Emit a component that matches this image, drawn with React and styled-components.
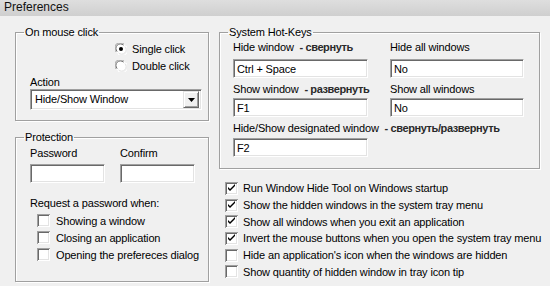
import React from "react";
import styled, { createGlobalStyle } from "styled-components";

const Global = createGlobalStyle`
  html, body { margin: 0; padding: 0; }
  body {
    background: #f0f0f0;
    font-family: "Liberation Sans", Arial, sans-serif;
    font-size: 11px;
    letter-spacing: -0.15px;
    color: #000;
    width: 550px;
    height: 286px;
    overflow: hidden;
  }
`;

const Window = styled.div`
  width: 550px;
  height: 286px;
  display: flex;
  flex-direction: column;
  background: #f0f0f0;
`;

const TitleBar = styled.div`
  height: 16px;
  flex: none;
  background: linear-gradient(#dedede, #cfcfcf);
  font-size: 12px;
  letter-spacing: 0;
  line-height: 15px;
  padding-left: 4px;
  color: #111;
`;

const Body = styled.div`
  display: flex;
  gap: 10px;
  padding: 10px 0 0 15px;
`;

const Column = styled.div`
  display: flex;
  flex-direction: column;
  width: ${(p) => p.$w}px;
  gap: ${(p) => p.$gap || 0}px;
`;

const Group = styled.fieldset`
  margin: 0;
  padding: 0;
  border: 1px solid #a0a0a0;
  box-shadow: inset 1px 1px 0 #fff, 1px 1px 0 #fff;
  min-width: 0;
`;

const Legend = styled.legend`
  padding: 0 1px;
  margin-left: 8px;
  line-height: 13px;
  font-size: 11px;
`;

const GroupBody = styled.div`
  display: flex;
  flex-direction: column;
  align-items: flex-start;
  padding: ${(p) => p.$pad};
`;

const RadioStack = styled.div`
  display: flex;
  flex-direction: column;
  margin-left: 85px;
  margin-top: 1px;
`;

const RadioRow = styled.label`
  display: flex;
  align-items: center;
  height: 17px;
  gap: 5px;
  white-space: nowrap;
`;

const Label = styled.div`
  line-height: 14px;
  height: 14px;
  white-space: nowrap;
  margin-top: ${(p) => p.$mt || 0}px;
`;

const Ru = styled.b`
  color: #2a2a2a;
  font-weight: bold;
  letter-spacing: -0.4px;
`;

const Combo = styled.div`
  width: 172px;
  height: 21px;
  box-sizing: border-box;
  border-top: 1px solid #a0a0a0;
  border-left: 1px solid #a0a0a0;
  border-right: 1px solid #fff;
  border-bottom: 1px solid #fff;
  box-shadow: inset 1px 1px 0 #696969, inset -1px -1px 0 #e3e3e3;
  background: #fff;
  display: flex;
  align-items: center;
  padding: 2px;
`;

const ComboText = styled.div`
  flex: 1;
  padding-left: 2px;
  line-height: 15px;
`;

const ComboButton = styled.div`
  width: 16px;
  height: 17px;
  box-sizing: border-box;
  background: #f0f0f0;
  border-top: 1px solid #e3e3e3;
  border-left: 1px solid #e3e3e3;
  border-right: 1px solid #696969;
  border-bottom: 1px solid #696969;
  box-shadow: inset 1px 1px 0 #fff, inset -1px -1px 0 #a0a0a0;
  display: flex;
  align-items: center;
  justify-content: center;
`;

const Field = styled.div`
  width: ${(p) => p.$w}px;
  height: 19px;
  box-sizing: border-box;
  border-top: 1px solid #a0a0a0;
  border-left: 1px solid #a0a0a0;
  border-right: 1px solid #fff;
  border-bottom: 1px solid #fff;
  box-shadow: inset 1px 1px 0 #696969, inset -1px -1px 0 #e3e3e3;
  background: #fff;
  padding: 2px 0 0 3px;
  line-height: 14px;
  margin-top: ${(p) => p.$mt || 0}px;
`;

const PassGrid = styled.div`
  display: grid;
  grid-template-columns: 75px 75px;
  column-gap: 15px;
  row-gap: 4px;
  margin-top: 2px;
`;

const CheckList = styled.div`
  display: flex;
  flex-direction: column;
  padding-left: ${(p) => p.$pl || 0}px;
  margin-top: ${(p) => p.$mt || 0}px;
`;

const CheckRow = styled.label`
  display: flex;
  align-items: center;
  height: ${(p) => p.$h}px;
  gap: ${(p) => p.$gap}px;
  white-space: nowrap;
`;

const BoxWrap = styled.span`
  width: ${(p) => p.$s || 13}px;
  height: ${(p) => p.$s || 13}px;
  flex: none;
  display: block;
`;

const HotGrid = styled.div`
  display: grid;
  grid-template-columns: 135px 134px;
  column-gap: 22px;
  margin-top: 1px;
`;

const HotCell = styled.div`
  display: flex;
  flex-direction: column;
  grid-column: ${(p) => (p.$wide ? "1 / span 2" : "auto")};
  margin-bottom: ${(p) => p.$mb || 0}px;
`;

const Check = ({ checked }) => (
  <BoxWrap>
    <svg width="13" height="13" viewBox="0 0 13 13">
      <rect x="0" y="0" width="13" height="13" fill="#a0a0a0" />
      <rect x="1" y="1" width="12" height="12" fill="#fff" />
      <rect x="1" y="1" width="11" height="11" fill="#696969" />
      <rect x="2" y="2" width="10" height="10" fill="#e3e3e3" />
      <rect x="2" y="2" width="9" height="9" fill="#fff" />
      {checked && <path d="M3 5 L3 7 L5 9 L10 4 L10 2 L5 7 Z" fill="#000" />}
    </svg>
  </BoxWrap>
);

const Radio = ({ checked }) => (
  <BoxWrap $s={12}>
    <svg width="12" height="12" viewBox="0 0 12 12">
      <circle cx="6" cy="6" r="5.5" fill="#fff" />
      <path d="M1.2 9 A5.5 5.5 0 0 1 9 1.2" stroke="#a0a0a0" strokeWidth="1" fill="none" />
      <path d="M2.2 8.5 A4.4 4.4 0 0 1 8.5 2.2" stroke="#696969" strokeWidth="1" fill="none" />
      <path d="M3 11 A5.5 5.5 0 0 0 11 3" stroke="#fff" strokeWidth="1" fill="none" />
      <path d="M3.5 9.8 A4.4 4.4 0 0 0 9.8 3.5" stroke="#e3e3e3" strokeWidth="1" fill="none" />
      {checked && <circle cx="6" cy="6" r="2" fill="#000" />}
    </svg>
  </BoxWrap>
);

const Arrow = () => (
  <svg width="7" height="4" viewBox="0 0 7 4">
    <path d="M0 0 H7 L3.5 4 Z" fill="#000" />
  </svg>
);

const options = [
  { text: "Run Window Hide Tool on Windows startup", on: true },
  { text: "Show the hidden windows in the system tray menu", on: true },
  { text: "Show all windows when you exit an application", on: true },
  { text: "Invert the mouse buttons when you open the system tray menu", on: true },
  { text: "Hide an application's icon when the windows are hidden", on: false },
  { text: "Show quantity of hidden window in tray icon tip", on: false },
];

const protect = ["Showing a window", "Closing an application", "Opening the prefereces dialog"];

export default function App() {
  return (
    <>
      <Global />
      <Window>
        <TitleBar>Preferences</TitleBar>
        <Body>
          <Column $w={194} $gap={10}>
            <Group>
              <Legend>On mouse click</Legend>
              <GroupBody $pad="0 0 10px 14px">
                <RadioStack>
                  <RadioRow>
                    <Radio checked />
                    Single click
                  </RadioRow>
                  <RadioRow>
                    <Radio />
                    Double click
                  </RadioRow>
                </RadioStack>
                <Label $mt={1}>Action</Label>
                <Combo>
                  <ComboText>Hide/Show Window</ComboText>
                  <ComboButton>
                    <Arrow />
                  </ComboButton>
                </Combo>
              </GroupBody>
            </Group>
            <Group>
              <Legend>Protection</Legend>
              <GroupBody $pad="0 0 18px 14px">
                <PassGrid>
                  <Label>Password</Label>
                  <Label>Confirm</Label>
                  <Field $w={75} />
                  <Field $w={75} />
                </PassGrid>
                <Label $mt={13}>Request a password when:</Label>
                <CheckList $pl={7} $mt={2}>
                  {protect.map((t) => (
                    <CheckRow key={t} $h={17} $gap={6}>
                      <Check />
                      {t}
                    </CheckRow>
                  ))}
                </CheckList>
              </GroupBody>
            </Group>
          </Column>
          <Column $w={321}>
            <Group>
              <Legend>System Hot-Keys</Legend>
              <GroupBody $pad="0 0 11px 13px">
                <HotGrid>
                  <HotCell $mb={4}>
                    <Label>
                      Hide window&nbsp; <Ru>- свернуть</Ru>
                    </Label>
                    <Field $w={135} $mt={5}>Ctrl + Space</Field>
                  </HotCell>
                  <HotCell $mb={4}>
                    <Label>Hide all windows</Label>
                    <Field $w={134} $mt={5}>No</Field>
                  </HotCell>
                  <HotCell $mb={4}>
                    <Label>
                      Show window&nbsp; <Ru>- развернуть</Ru>
                    </Label>
                    <Field $w={135} $mt={2}>F1</Field>
                  </HotCell>
                  <HotCell $mb={4}>
                    <Label>Show all windows</Label>
                    <Field $w={134} $mt={2}>No</Field>
                  </HotCell>
                  <HotCell $wide>
                    <Label>
                      Hide/Show designated window&nbsp; <Ru>- свернуть/развернуть</Ru>
                    </Label>
                    <Field $w={135} $mt={3}>F2</Field>
                  </HotCell>
                </HotGrid>
              </GroupBody>
            </Group>
            <CheckList $pl={6} $mt={11}>
              {options.map((o) => (
                <CheckRow key={o.text} $h={16.7} $gap={5}>
                  <Check checked={o.on} />
                  {o.text}
                </CheckRow>
              ))}
            </CheckList>
          </Column>
        </Body>
      </Window>
    </>
  );
}
